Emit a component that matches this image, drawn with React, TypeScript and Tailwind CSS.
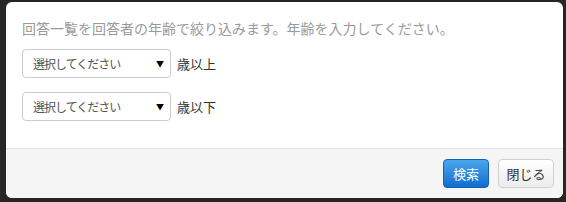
const jp = { fontFamily: '"Noto Sans CJK JP", "Noto Sans", sans-serif' }

interface AgeSelectProps {
  label: string
}

const AgeSelect: React.FC<AgeSelectProps> = ({ label }) => {
  return (
    <div className="flex items-center gap-[6px]">
      <div className="flex h-[29px] w-[149px] items-center justify-between rounded-[4px] border border-[#cccccc] bg-white pl-[10px] pr-[6px]">
        <span className="text-[12px] tracking-[-1px] text-[#555555]">選択してください</span>
        <span className="text-[8px] leading-none text-black">▼</span>
      </div>
      <span className="text-[13px] text-[#333333]">{label}</span>
    </div>
  )
}

const App = () => {
  return (
    <div className="h-[202px] w-[566px] bg-[#262626] pb-[4px] pl-[6px] pr-[3px] pt-[2px]" style={jp}>
      <div className="flex h-[196px] w-[557px] flex-col overflow-hidden rounded-[6px] bg-white">
        <div className="flex h-[146px] flex-col px-[16px] pt-[16px]">
          <p className="text-[14px] leading-[20px] text-[#9a9a9a]">
            回答一覧を回答者の年齢で絞り込みます。年齢を入力してください。
          </p>
          <div className="mt-[11px] flex flex-col gap-[14px]">
            <AgeSelect label="歳以上" />
            <AgeSelect label="歳以下" />
          </div>
        </div>
        <div className="flex flex-1 items-start justify-end gap-[9px] border-t border-[#e5e5e5] bg-[#f5f5f5] pr-[9px] pt-[10px]">
          <button className="h-[29px] w-[46px] rounded-[4px] border border-[#0f62b8] bg-gradient-to-b from-[#4ba6ec] to-[#0c6ed0] text-[13px] text-white">
            検索
          </button>
          <button className="h-[29px] w-[56px] rounded-[4px] border border-[#d0d0d0] bg-gradient-to-b from-white to-[#ececec] text-[13px] text-[#333333]">
            閉じる
          </button>
        </div>
      </div>
    </div>
  )
}

export default App
